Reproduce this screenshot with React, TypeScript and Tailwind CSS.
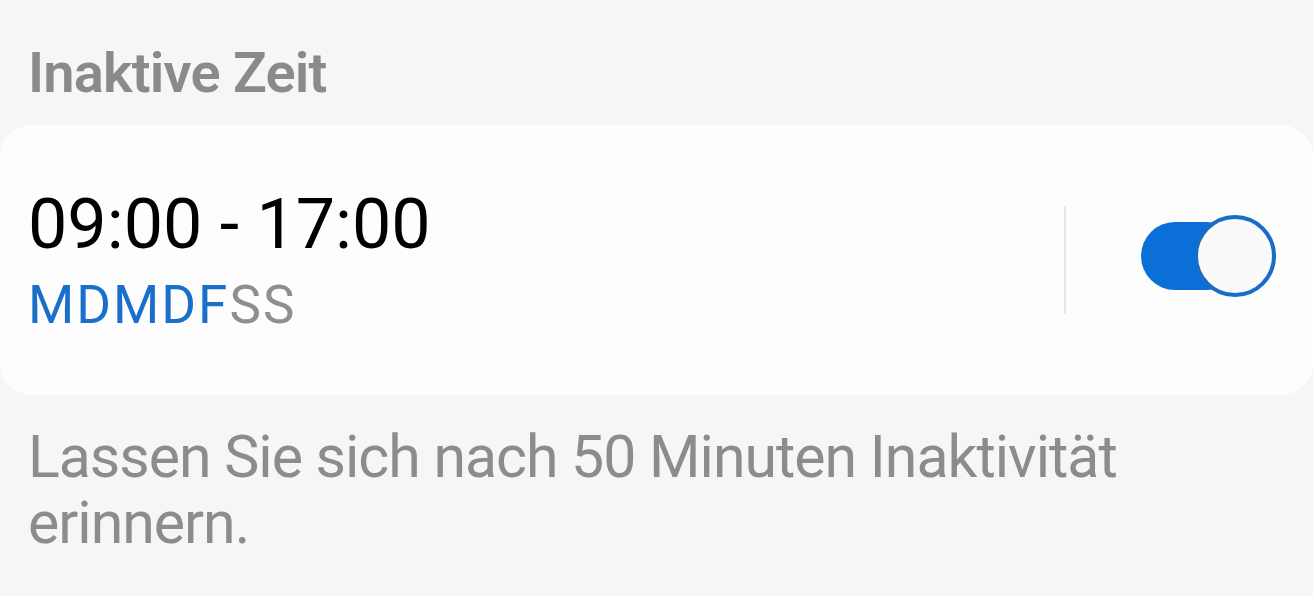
import React from "react";

export default function App() {
  return (
    <div
      className="w-[1313px] h-[596px] overflow-hidden bg-[#f6f6f6]"
      style={{ fontFamily: "Roboto, 'Noto Sans', sans-serif" }}
    >
      <div className="pt-[45px] pl-[28px] text-[56px] leading-[56px] font-semibold tracking-[-0.8px] text-[#8a8a8a]">
        Inaktive Zeit
      </div>
      <div className="mt-[24px] h-[270px] rounded-[32px] bg-[#fdfdfd] flex items-center pl-[28px]">
        <div className="flex-1 flex flex-col">
          <div className="text-[70px] leading-[70px] text-black">09:00 - 17:00</div>
          <div className="mt-[20px] text-[53px] leading-[53px] tracking-[2px]">
            <span className="text-[#1a6fcb]">MDMDF</span>
            <span className="text-[#8f8f8f]">SS</span>
          </div>
        </div>
        <div className="w-[2px] h-[108px] bg-[#e6e6e6]" />
        <div className="relative ml-[75px] mr-[37px] mb-[8px] w-[135px] h-[82px]">
          <div className="absolute left-0 top-[7px] w-[100px] h-[68px] rounded-full bg-[#0b6fd8]" />
          <div className="absolute right-0 top-0 w-[82px] h-[82px] rounded-full border-[4px] border-[#176dc8] bg-[#fafafa]" />
        </div>
      </div>
      <div className="mt-[29px] pl-[28px] pr-[150px] text-[59px] leading-[66px] tracking-[-1px] text-[#8c8c8c]">
        Lassen Sie sich nach 50 Minuten Inaktivität erinnern.
      </div>
    </div>
  );
}
